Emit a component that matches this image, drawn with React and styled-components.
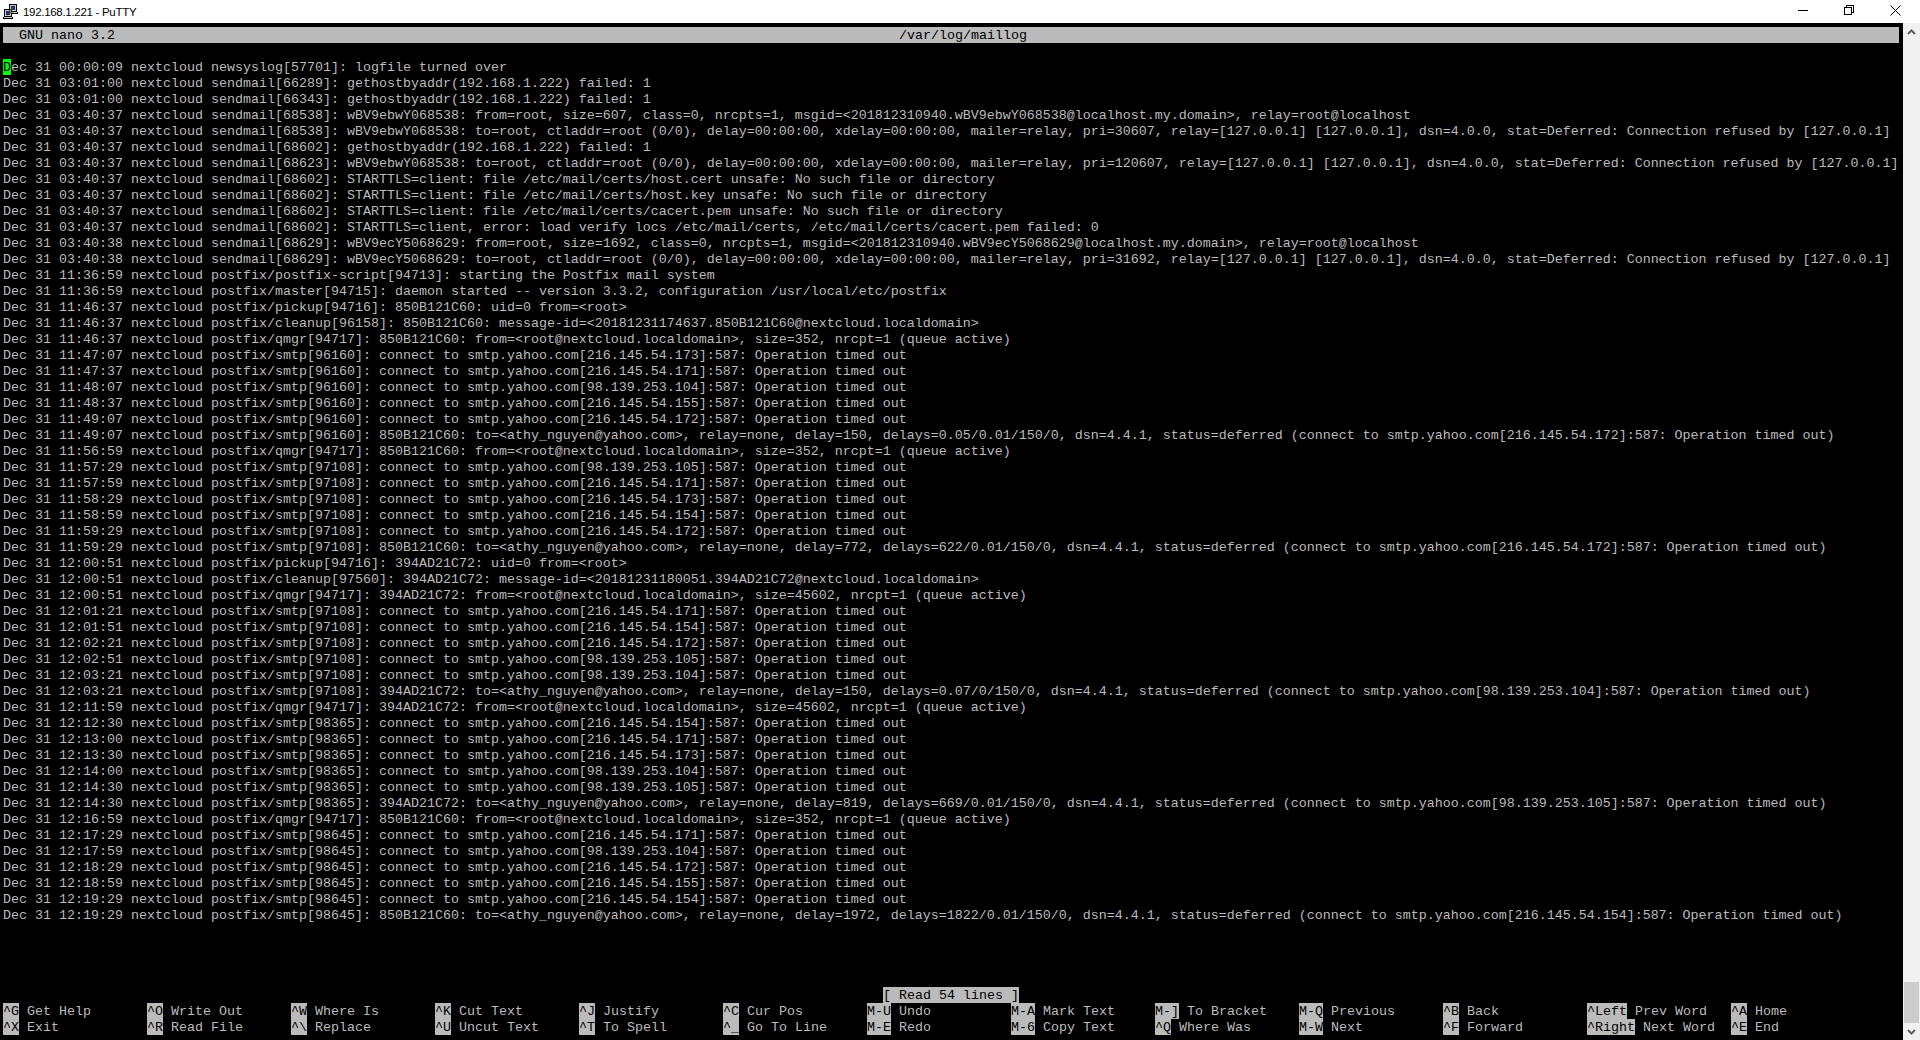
import React from "react";
import styled, { createGlobalStyle } from "styled-components";

const LOG_LINES = [
  "Dec 31 00:00:09 nextcloud newsyslog[57701]: logfile turned over",
  "Dec 31 03:01:00 nextcloud sendmail[66289]: gethostbyaddr(192.168.1.222) failed: 1",
  "Dec 31 03:01:00 nextcloud sendmail[66343]: gethostbyaddr(192.168.1.222) failed: 1",
  "Dec 31 03:40:37 nextcloud sendmail[68538]: wBV9ebwY068538: from=root, size=607, class=0, nrcpts=1, msgid=<201812310940.wBV9ebwY068538@localhost.my.domain>, relay=root@localhost",
  "Dec 31 03:40:37 nextcloud sendmail[68538]: wBV9ebwY068538: to=root, ctladdr=root (0/0), delay=00:00:00, xdelay=00:00:00, mailer=relay, pri=30607, relay=[127.0.0.1] [127.0.0.1], dsn=4.0.0, stat=Deferred: Connection refused by [127.0.0.1]",
  "Dec 31 03:40:37 nextcloud sendmail[68602]: gethostbyaddr(192.168.1.222) failed: 1",
  "Dec 31 03:40:37 nextcloud sendmail[68623]: wBV9ebwY068538: to=root, ctladdr=root (0/0), delay=00:00:00, xdelay=00:00:00, mailer=relay, pri=120607, relay=[127.0.0.1] [127.0.0.1], dsn=4.0.0, stat=Deferred: Connection refused by [127.0.0.1]",
  "Dec 31 03:40:37 nextcloud sendmail[68602]: STARTTLS=client: file /etc/mail/certs/host.cert unsafe: No such file or directory",
  "Dec 31 03:40:37 nextcloud sendmail[68602]: STARTTLS=client: file /etc/mail/certs/host.key unsafe: No such file or directory",
  "Dec 31 03:40:37 nextcloud sendmail[68602]: STARTTLS=client: file /etc/mail/certs/cacert.pem unsafe: No such file or directory",
  "Dec 31 03:40:37 nextcloud sendmail[68602]: STARTTLS=client, error: load verify locs /etc/mail/certs, /etc/mail/certs/cacert.pem failed: 0",
  "Dec 31 03:40:38 nextcloud sendmail[68629]: wBV9ecY5068629: from=root, size=1692, class=0, nrcpts=1, msgid=<201812310940.wBV9ecY5068629@localhost.my.domain>, relay=root@localhost",
  "Dec 31 03:40:38 nextcloud sendmail[68629]: wBV9ecY5068629: to=root, ctladdr=root (0/0), delay=00:00:00, xdelay=00:00:00, mailer=relay, pri=31692, relay=[127.0.0.1] [127.0.0.1], dsn=4.0.0, stat=Deferred: Connection refused by [127.0.0.1]",
  "Dec 31 11:36:59 nextcloud postfix/postfix-script[94713]: starting the Postfix mail system",
  "Dec 31 11:36:59 nextcloud postfix/master[94715]: daemon started -- version 3.3.2, configuration /usr/local/etc/postfix",
  "Dec 31 11:46:37 nextcloud postfix/pickup[94716]: 850B121C60: uid=0 from=<root>",
  "Dec 31 11:46:37 nextcloud postfix/cleanup[96158]: 850B121C60: message-id=<20181231174637.850B121C60@nextcloud.localdomain>",
  "Dec 31 11:46:37 nextcloud postfix/qmgr[94717]: 850B121C60: from=<root@nextcloud.localdomain>, size=352, nrcpt=1 (queue active)",
  "Dec 31 11:47:07 nextcloud postfix/smtp[96160]: connect to smtp.yahoo.com[216.145.54.173]:587: Operation timed out",
  "Dec 31 11:47:37 nextcloud postfix/smtp[96160]: connect to smtp.yahoo.com[216.145.54.171]:587: Operation timed out",
  "Dec 31 11:48:07 nextcloud postfix/smtp[96160]: connect to smtp.yahoo.com[98.139.253.104]:587: Operation timed out",
  "Dec 31 11:48:37 nextcloud postfix/smtp[96160]: connect to smtp.yahoo.com[216.145.54.155]:587: Operation timed out",
  "Dec 31 11:49:07 nextcloud postfix/smtp[96160]: connect to smtp.yahoo.com[216.145.54.172]:587: Operation timed out",
  "Dec 31 11:49:07 nextcloud postfix/smtp[96160]: 850B121C60: to=<athy_nguyen@yahoo.com>, relay=none, delay=150, delays=0.05/0.01/150/0, dsn=4.4.1, status=deferred (connect to smtp.yahoo.com[216.145.54.172]:587: Operation timed out)",
  "Dec 31 11:56:59 nextcloud postfix/qmgr[94717]: 850B121C60: from=<root@nextcloud.localdomain>, size=352, nrcpt=1 (queue active)",
  "Dec 31 11:57:29 nextcloud postfix/smtp[97108]: connect to smtp.yahoo.com[98.139.253.105]:587: Operation timed out",
  "Dec 31 11:57:59 nextcloud postfix/smtp[97108]: connect to smtp.yahoo.com[216.145.54.171]:587: Operation timed out",
  "Dec 31 11:58:29 nextcloud postfix/smtp[97108]: connect to smtp.yahoo.com[216.145.54.173]:587: Operation timed out",
  "Dec 31 11:58:59 nextcloud postfix/smtp[97108]: connect to smtp.yahoo.com[216.145.54.154]:587: Operation timed out",
  "Dec 31 11:59:29 nextcloud postfix/smtp[97108]: connect to smtp.yahoo.com[216.145.54.172]:587: Operation timed out",
  "Dec 31 11:59:29 nextcloud postfix/smtp[97108]: 850B121C60: to=<athy_nguyen@yahoo.com>, relay=none, delay=772, delays=622/0.01/150/0, dsn=4.4.1, status=deferred (connect to smtp.yahoo.com[216.145.54.172]:587: Operation timed out)",
  "Dec 31 12:00:51 nextcloud postfix/pickup[94716]: 394AD21C72: uid=0 from=<root>",
  "Dec 31 12:00:51 nextcloud postfix/cleanup[97560]: 394AD21C72: message-id=<20181231180051.394AD21C72@nextcloud.localdomain>",
  "Dec 31 12:00:51 nextcloud postfix/qmgr[94717]: 394AD21C72: from=<root@nextcloud.localdomain>, size=45602, nrcpt=1 (queue active)",
  "Dec 31 12:01:21 nextcloud postfix/smtp[97108]: connect to smtp.yahoo.com[216.145.54.171]:587: Operation timed out",
  "Dec 31 12:01:51 nextcloud postfix/smtp[97108]: connect to smtp.yahoo.com[216.145.54.154]:587: Operation timed out",
  "Dec 31 12:02:21 nextcloud postfix/smtp[97108]: connect to smtp.yahoo.com[216.145.54.172]:587: Operation timed out",
  "Dec 31 12:02:51 nextcloud postfix/smtp[97108]: connect to smtp.yahoo.com[98.139.253.105]:587: Operation timed out",
  "Dec 31 12:03:21 nextcloud postfix/smtp[97108]: connect to smtp.yahoo.com[98.139.253.104]:587: Operation timed out",
  "Dec 31 12:03:21 nextcloud postfix/smtp[97108]: 394AD21C72: to=<athy_nguyen@yahoo.com>, relay=none, delay=150, delays=0.07/0/150/0, dsn=4.4.1, status=deferred (connect to smtp.yahoo.com[98.139.253.104]:587: Operation timed out)",
  "Dec 31 12:11:59 nextcloud postfix/qmgr[94717]: 394AD21C72: from=<root@nextcloud.localdomain>, size=45602, nrcpt=1 (queue active)",
  "Dec 31 12:12:30 nextcloud postfix/smtp[98365]: connect to smtp.yahoo.com[216.145.54.154]:587: Operation timed out",
  "Dec 31 12:13:00 nextcloud postfix/smtp[98365]: connect to smtp.yahoo.com[216.145.54.171]:587: Operation timed out",
  "Dec 31 12:13:30 nextcloud postfix/smtp[98365]: connect to smtp.yahoo.com[216.145.54.173]:587: Operation timed out",
  "Dec 31 12:14:00 nextcloud postfix/smtp[98365]: connect to smtp.yahoo.com[98.139.253.104]:587: Operation timed out",
  "Dec 31 12:14:30 nextcloud postfix/smtp[98365]: connect to smtp.yahoo.com[98.139.253.105]:587: Operation timed out",
  "Dec 31 12:14:30 nextcloud postfix/smtp[98365]: 394AD21C72: to=<athy_nguyen@yahoo.com>, relay=none, delay=819, delays=669/0.01/150/0, dsn=4.4.1, status=deferred (connect to smtp.yahoo.com[98.139.253.105]:587: Operation timed out)",
  "Dec 31 12:16:59 nextcloud postfix/qmgr[94717]: 850B121C60: from=<root@nextcloud.localdomain>, size=352, nrcpt=1 (queue active)",
  "Dec 31 12:17:29 nextcloud postfix/smtp[98645]: connect to smtp.yahoo.com[216.145.54.171]:587: Operation timed out",
  "Dec 31 12:17:59 nextcloud postfix/smtp[98645]: connect to smtp.yahoo.com[98.139.253.104]:587: Operation timed out",
  "Dec 31 12:18:29 nextcloud postfix/smtp[98645]: connect to smtp.yahoo.com[216.145.54.172]:587: Operation timed out",
  "Dec 31 12:18:59 nextcloud postfix/smtp[98645]: connect to smtp.yahoo.com[216.145.54.155]:587: Operation timed out",
  "Dec 31 12:19:29 nextcloud postfix/smtp[98645]: connect to smtp.yahoo.com[216.145.54.154]:587: Operation timed out",
  "Dec 31 12:19:29 nextcloud postfix/smtp[98645]: 850B121C60: to=<athy_nguyen@yahoo.com>, relay=none, delay=1972, delays=1822/0.01/150/0, dsn=4.4.1, status=deferred (connect to smtp.yahoo.com[216.145.54.154]:587: Operation timed out)",
];

// nano help lines, one entry per column
const SHORTCUTS = [
  ["^G", "Get Help"], ["^O", "Write Out"], ["^W", "Where Is"], ["^K", "Cut Text"], ["^J", "Justify"],
  ["^C", "Cur Pos"], ["M-U", "Undo"], ["M-A", "Mark Text"], ["M-]", "To Bracket"], ["M-Q", "Previous"],
  ["^B", "Back"], ["^Left", "Prev Word"], ["^A", "Home"],
  ["^X", "Exit"], ["^R", "Read File"], ["^\\", "Replace"], ["^U", "Uncut Text"], ["^T", "To Spell"],
  ["^_", "Go To Line"], ["M-E", "Redo"], ["M-6", "Copy Text"], ["^Q", "Where Was"], ["M-W", "Next"],
  ["^F", "Forward"], ["^Right", "Next Word"], ["^E", "End"],
];

const GlobalStyle = createGlobalStyle`
  html, body {
    margin: 0;
    height: 100%;
    overflow: hidden;
    background: #000;
  }
`;

const Window = styled.div`
  display: flex;
  flex-direction: column;
  height: 100vh;
`;

const TitleBar = styled.header`
  display: flex;
  align-items: center;
  flex: 0 0 23px;
  padding-left: 3px;
  background: #fff;
  color: #000;
  font: 11.5px "Liberation Sans", Arial, sans-serif;
  letter-spacing: -0.3px;
`;

const WindowTitle = styled.span`
  margin-left: 5px;
  flex: 1;
`;

const WindowControls = styled.div`
  display: flex;
  align-items: center;
  height: 100%;
`;

const ControlButton = styled.div`
  display: flex;
  align-items: center;
  justify-content: center;
  width: 46px;
  height: 100%;
  padding: 0 4px 3px 0;
  box-sizing: border-box;
`;

const Body = styled.main`
  display: flex;
  flex: 1;
  min-height: 0;
`;

/* rows are 16px, the taller line box drops the glyphs 1px inside each row */
const Terminal = styled.section`
  display: flex;
  flex-direction: column;
  flex: 1;
  min-width: 0;
  padding: 4px 4px 5px 3px;
  background: #000;
  color: #bbb;
  font-family: "Liberation Mono", "Courier New", monospace;
  font-size: 13.3333px;
  line-height: 18px;
  white-space: pre;
`;

const Inverse = styled.span`
  display: inline-block;
  height: 16px;
  background: #bbb;
  color: #000;
`;

const NanoHeader = styled.div`
  display: grid;
  grid-template-columns: 896px 1fr;
  height: 16px;
  background: #bbb;
  color: #000;
`;

const LogArea = styled.div`
  flex: 1;
  min-height: 0;
  padding-top: 16px;
`;

const LogLine = styled.div`
  height: 16px;
`;

const Cursor = styled.span`
  display: inline-block;
  height: 16px;
  background: #0f0;
  color: #000;
`;

const StatusRow = styled.div`
  display: flex;
  justify-content: center;
  height: 16px;
`;

const HelpGrid = styled.div`
  display: grid;
  grid-template-columns: repeat(13, 144px);
  grid-auto-rows: 16px;
`;

const Scrollbar = styled.aside`
  display: flex;
  flex-direction: column;
  flex: 0 0 17px;
  background: #f0f0f0;
`;

const ScrollArrow = styled.div`
  display: flex;
  align-items: center;
  justify-content: center;
  flex: 0 0 17px;
`;

const ScrollTrack = styled.div`
  display: flex;
  flex: 1;
  align-items: flex-end;
  justify-content: center;
`;

const ScrollThumb = styled.div`
  width: 15px;
  height: 41px;
  background: #cdcdcd;
`;

function PuttyIcon() {
  return (
    <svg width="15" height="15" viewBox="0 0 15 15" shapeRendering="crispEdges">
      <rect x="6" y="0" width="8" height="8" fill="#000" />
      <rect x="7" y="1" width="6" height="6" fill="#c8c8c8" />
      <rect x="8" y="2" width="4" height="4" fill="#1f2f9a" />
      <rect x="6" y="8" width="9" height="2" fill="#000" />
      <rect x="7" y="8" width="7" height="1" fill="#c8c8c8" />
      <rect x="1" y="5" width="8" height="8" fill="#000" />
      <rect x="2" y="6" width="6" height="6" fill="#c8c8c8" />
      <rect x="3" y="7" width="4" height="4" fill="#1f2f9a" />
      <rect x="0" y="13" width="10" height="2" fill="#000" />
      <rect x="1" y="13" width="8" height="1" fill="#c8c8c8" />
      <polygon points="12,2 6,6.5 8.5,7.5 4,11 10,8 7.5,6.5" fill="#ffe000" stroke="#000" strokeWidth="0.4" shapeRendering="auto" />
    </svg>
  );
}

function MinimizeIcon() {
  return (
    <svg width="10" height="10" viewBox="0 0 10 10" shapeRendering="crispEdges">
      <rect x="0" y="5" width="10" height="1" fill="#000" />
    </svg>
  );
}

function RestoreIcon() {
  return (
    <svg width="10" height="10" viewBox="0 0 10 10" shapeRendering="crispEdges" fill="none" stroke="#000">
      <rect x="0.5" y="2.5" width="7" height="7" />
      <path d="M2.5 2.5V0.5H9.5V7.5H7.5" />
    </svg>
  );
}

function CloseIcon() {
  return (
    <svg width="11" height="11" viewBox="0 0 11 11" fill="none" stroke="#000" strokeWidth="1">
      <path d="M0.5 0.5L10.5 10.5M10.5 0.5L0.5 10.5" />
    </svg>
  );
}

function Chevron({ down }) {
  return (
    <svg width="9" height="6" viewBox="0 0 9 6" fill="none" stroke="#606060" strokeWidth="2">
      <path d={down ? "M1 1L4.5 4.5L8 1" : "M1 5L4.5 1.5L8 5"} />
    </svg>
  );
}

export default function App() {
  return (
    <Window>
      <GlobalStyle />
      <TitleBar>
        <PuttyIcon />
        <WindowTitle>192.168.1.221 - PuTTY</WindowTitle>
        <WindowControls>
          <ControlButton><MinimizeIcon /></ControlButton>
          <ControlButton><RestoreIcon /></ControlButton>
          <ControlButton><CloseIcon /></ControlButton>
        </WindowControls>
      </TitleBar>
      <Body>
        <Terminal>
          <NanoHeader>
            <span>  GNU nano 3.2</span>
            <span>/var/log/maillog</span>
          </NanoHeader>
          <LogArea>
            {LOG_LINES.map((line, i) =>
              i === 0 ? (
                <LogLine key={i}>
                  <Cursor>{line[0]}</Cursor>
                  {line.slice(1)}
                </LogLine>
              ) : (
                <LogLine key={i}>{line}</LogLine>
              )
            )}
          </LogArea>
          <StatusRow>
            <Inverse>[ Read 54 lines ]</Inverse>
          </StatusRow>
          <HelpGrid>
            {SHORTCUTS.map(([key, label]) => (
              <div key={key}>
                <Inverse>{key}</Inverse> {label}
              </div>
            ))}
          </HelpGrid>
        </Terminal>
        <Scrollbar>
          <ScrollArrow><Chevron /></ScrollArrow>
          <ScrollTrack><ScrollThumb /></ScrollTrack>
          <ScrollArrow><Chevron down /></ScrollArrow>
        </Scrollbar>
      </Body>
    </Window>
  );
}
